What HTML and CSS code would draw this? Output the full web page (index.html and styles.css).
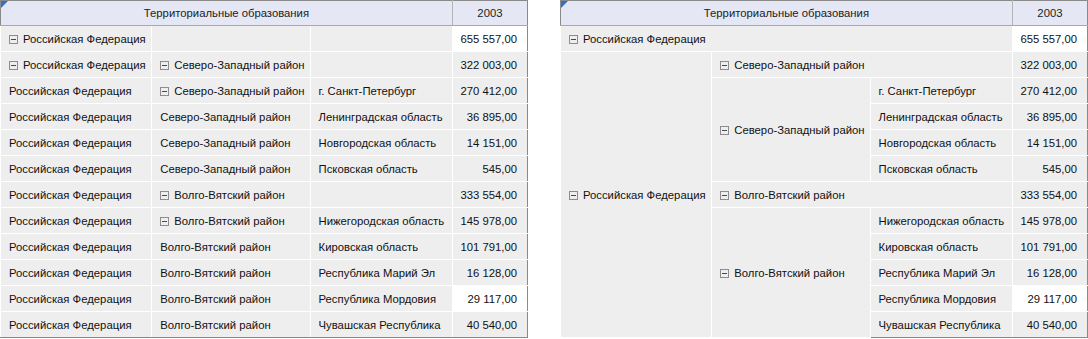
FILE: index.html
```html
<!DOCTYPE html>
<html>
<head>
<meta charset="utf-8">
<link rel="stylesheet" href="styles.css">
</head>
<body>
<div class="page">
  <div class="grid-wrap">
    <span class="corner"></span>
    <table class="grid">
      <colgroup><col class="c1"><col class="c2"><col class="c3"><col class="cv"></colgroup>
      <thead>
        <tr><th colspan="3" class="hd">Территориальные образования</th><th class="hd hv">2003</th></tr>
      </thead>
      <tbody>
        <tr><td><span class="tg"></span>Российская Федерация</td><td></td><td></td><td class="v hi">655 557,00</td></tr>
        <tr><td><span class="tg"></span>Российская Федерация</td><td><span class="tg"></span>Северо-Западный район</td><td></td><td class="v">322 003,00</td></tr>
        <tr><td>Российская Федерация</td><td><span class="tg"></span>Северо-Западный район</td><td>г. Санкт-Петербург</td><td class="v">270 412,00</td></tr>
        <tr><td>Российская Федерация</td><td>Северо-Западный район</td><td>Ленинградская область</td><td class="v">36 895,00</td></tr>
        <tr><td>Российская Федерация</td><td>Северо-Западный район</td><td>Новгородская область</td><td class="v">14 151,00</td></tr>
        <tr><td>Российская Федерация</td><td>Северо-Западный район</td><td>Псковская область</td><td class="v">545,00</td></tr>
        <tr><td>Российская Федерация</td><td><span class="tg"></span>Волго-Вятский район</td><td></td><td class="v">333 554,00</td></tr>
        <tr><td>Российская Федерация</td><td><span class="tg"></span>Волго-Вятский район</td><td>Нижегородская область</td><td class="v">145 978,00</td></tr>
        <tr><td>Российская Федерация</td><td>Волго-Вятский район</td><td>Кировская область</td><td class="v">101 791,00</td></tr>
        <tr><td>Российская Федерация</td><td>Волго-Вятский район</td><td>Республика Марий Эл</td><td class="v">16 128,00</td></tr>
        <tr><td>Российская Федерация</td><td>Волго-Вятский район</td><td>Республика Мордовия</td><td class="v hi">29 117,00</td></tr>
        <tr><td>Российская Федерация</td><td>Волго-Вятский район</td><td>Чувашская Республика</td><td class="v">40 540,00</td></tr>
      </tbody>
    </table>
  </div>

  <div class="grid-wrap">
    <span class="corner"></span>
    <table class="grid">
      <colgroup><col class="c1"><col class="c2"><col class="c3"><col class="cv"></colgroup>
      <thead>
        <tr><th colspan="3" class="hd">Территориальные образования</th><th class="hd hv">2003</th></tr>
      </thead>
      <tbody>
        <tr><td colspan="3"><span class="tg"></span>Российская Федерация</td><td class="v hi">655 557,00</td></tr>
        <tr><td rowspan="11"><span class="tg"></span>Российская Федерация</td><td colspan="2"><span class="tg"></span>Северо-Западный район</td><td class="v">322 003,00</td></tr>
        <tr><td rowspan="4"><span class="tg"></span>Северо-Западный район</td><td>г. Санкт-Петербург</td><td class="v">270 412,00</td></tr>
        <tr><td>Ленинградская область</td><td class="v">36 895,00</td></tr>
        <tr><td>Новгородская область</td><td class="v">14 151,00</td></tr>
        <tr><td>Псковская область</td><td class="v">545,00</td></tr>
        <tr><td colspan="2"><span class="tg"></span>Волго-Вятский район</td><td class="v">333 554,00</td></tr>
        <tr><td rowspan="5"><span class="tg"></span>Волго-Вятский район</td><td>Нижегородская область</td><td class="v">145 978,00</td></tr>
        <tr><td>Кировская область</td><td class="v">101 791,00</td></tr>
        <tr><td>Республика Марий Эл</td><td class="v">16 128,00</td></tr>
        <tr><td>Республика Мордовия</td><td class="v hi">29 117,00</td></tr>
        <tr><td>Чувашская Республика</td><td class="v">40 540,00</td></tr>
      </tbody>
    </table>
  </div>
</div>
</body>
</html>
```

FILE: styles.css
```css
html, body {
  margin: 0;
  padding: 0;
  background: #ffffff;
}

.page {
  display: flex;
  gap: 32px;
  font-family: "Liberation Sans", Arial, sans-serif;
  font-size: 11.3px;
  color: #111111;
}

.grid-wrap {
  position: relative;
  width: 528px;
}

.corner {
  position: absolute;
  left: 1px;
  top: 1px;
  width: 0;
  height: 0;
  border-top: 7px solid #2f6fd0;
  border-right: 7px solid transparent;
}

.grid {
  width: 528px;
  table-layout: fixed;
  border-collapse: collapse;
  border: 1px solid #8a8a8a;
}

.c1 { width: 151px; }
.c2 { width: 158px; }
.c3 { width: 142px; }
.cv { width: 75px; }

.hd {
  height: 24px;
  padding: 0;
  background: #e5e7f4;
  border-bottom: 1px solid #a9a9a9;
  font-weight: normal;
  color: #222222;
  text-align: center;
  vertical-align: middle;
}

.hv {
  border-left: 1px solid #b5b5b5;
}

.grid td {
  height: 25px;
  padding: 0 0 0 8px;
  background: #eeeeee;
  border: 1px solid #ffffff;
  white-space: nowrap;
  overflow: hidden;
  vertical-align: middle;
}

.grid td.v {
  text-align: right;
  padding: 0 10px 0 0;
  border-left: 1px solid #b5b5b5;
  border-right: 1px solid #8a8a8a;
}

.grid tr:last-child td {
  border-bottom: 1px solid #8a8a8a;
}

.grid td.hi {
  background: #ffffff;
}

.tg {
  display: inline-block;
  box-sizing: border-box;
  width: 9px;
  height: 9px;
  margin-right: 5px;
  border: 1px solid #8c8c8c;
  background: linear-gradient(#4a4a4a, #4a4a4a) center / 5px 1px no-repeat;
  vertical-align: -1px;
}
```
